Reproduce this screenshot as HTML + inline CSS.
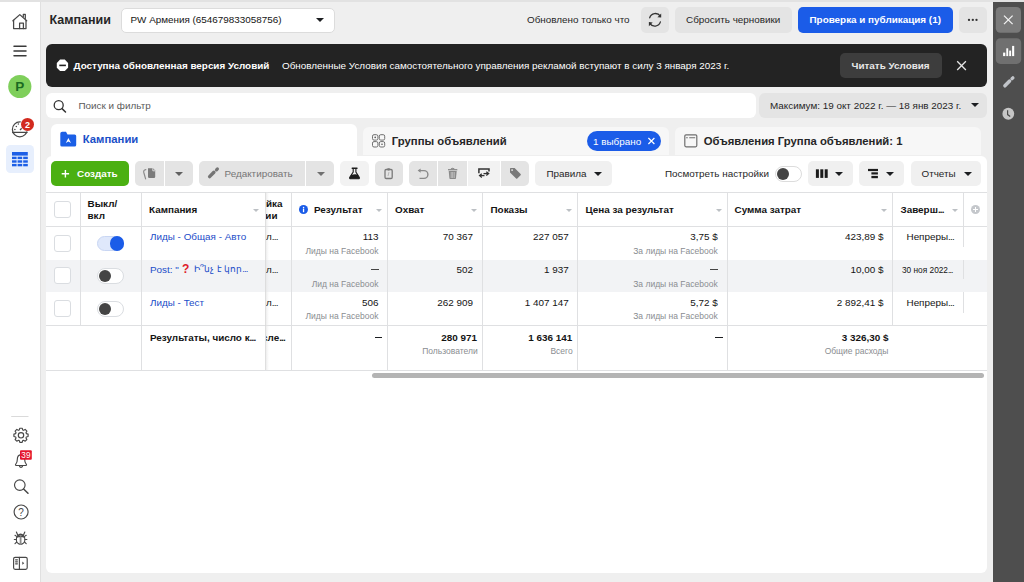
<!DOCTYPE html>
<html><head><meta charset="utf-8">
<style>
*{margin:0;padding:0;box-sizing:border-box}
html,body{width:1024px;height:582px;overflow:hidden}
body{background:#efefef;font-family:"Liberation Sans",sans-serif;color:#141414;position:relative}
.a{position:absolute}
.t{position:absolute;white-space:nowrap;line-height:1;font-size:9.9px}
.b{font-weight:bold}
.btn{position:absolute;background:#e4e4e4;border-radius:5px}
.tri{position:absolute;width:0;height:0;border-left:4px solid transparent;border-right:4px solid transparent;border-top:4.5px solid #1c1e21}
.stri{position:absolute;width:0;height:0;border-left:3px solid transparent;border-right:3px solid transparent;border-top:3px solid #bcc0c4}
.vl{position:absolute;width:1px;background:#dfe0e2}
.hl{position:absolute;height:1px;background:#dfe0e2}
.el{letter-spacing:-0.8px}
.sub{font-size:8.5px;color:#8a8d91}
svg{position:absolute;overflow:visible}
</style></head><body>

<!-- top strip -->
<div class="a" style="left:0;top:0;width:1024px;height:2px;background:#e2e2e2"></div>

<!-- left sidebar -->
<div class="a" style="left:0;top:2px;width:41px;height:580px;background:#fff;border-right:1px solid #e0e0e0"></div>

<!-- right dark panel -->
<div class="a" style="left:993px;top:2px;width:31px;height:580px;background:#4e4e4e"></div>

<!-- header -->
<div class="t b" style="left:49.5px;top:13.6px;font-size:12.5px;color:#262626">Кампании</div>
<div class="a" style="left:121px;top:7.5px;width:213.5px;height:25px;background:#fff;border:1px solid #dcdcdc;border-radius:5px"></div>
<div class="t" style="left:130.5px;top:15.4px">PW Армения (654679833058756)</div>
<div class="tri" style="left:316px;top:17.5px"></div>

<div class="t" style="left:527px;top:15.4px;color:#262626">Обновлено только что</div>
<div class="btn" style="left:641px;top:7px;width:28px;height:26px"></div>
<div class="btn" style="left:675px;top:7px;width:117px;height:26px"></div>
<div class="t" style="left:686px;top:15.4px;color:#262626">Сбросить черновики</div>
<div class="a" style="left:798px;top:7px;width:155px;height:25.5px;background:#1b5ce8;border-radius:5px"></div>
<div class="t b" style="left:809.5px;top:15.4px;color:#fff">Проверка и публикация (1)</div>
<div class="btn" style="left:958.5px;top:7px;width:28.5px;height:26px"></div>

<!-- banner -->
<div class="a" style="left:45.5px;top:44px;width:941.5px;height:43px;background:#232323;border-radius:6px"></div>
<div class="t b" style="left:73.5px;top:60.7px;color:#fff">Доступна обновленная версия Условий</div>
<div class="t" style="left:282px;top:60.7px;color:#fff">Обновленные Условия самостоятельного управления рекламой вступают в силу 3 января 2023 г.</div>
<div class="a" style="left:840px;top:53px;width:101.5px;height:25px;background:#3d3d3d;border-radius:5px"></div>
<div class="t b" style="left:851.5px;top:60.7px;color:#e8e8e8">Читать Условия</div>

<!-- search -->
<div class="a" style="left:46px;top:93px;width:709.5px;height:25px;background:#fff;border-radius:6px"></div>
<div class="t" style="left:78.5px;top:100.7px;color:#5a5a5a">Поиск и фильтр</div>
<div class="a" style="left:759px;top:92.5px;width:228px;height:25.5px;background:#e4e4e4;border-radius:6px"></div>
<div class="t" style="left:770px;top:100.7px;color:#262626">Максимум: 19 окт 2022 г. — 18 янв 2023 г.</div>
<div class="tri" style="left:970.5px;top:103px"></div>

<!-- tabs -->
<div class="a" style="left:51px;top:124px;width:306px;height:40px;background:#fff;border-radius:6px 6px 0 0"></div>
<div class="t b" style="left:82.8px;top:133.8px;font-size:11.3px;color:#1a4fc8">Кампании</div>
<div class="a" style="left:363px;top:127px;width:306px;height:28px;background:#f7f7f7;border-radius:6px 6px 0 0"></div>
<div class="t b" style="left:391.8px;top:135.6px;font-size:11.3px;color:#262626">Группы объявлений</div>
<div class="a" style="left:587px;top:131px;width:74px;height:20px;background:#1b5ce8;border-radius:10px"></div>
<div class="t" style="left:593px;top:137px;color:#fff">1 выбрано</div>
<div class="a" style="left:675px;top:127px;width:306px;height:28px;background:#f7f7f7;border-radius:6px 6px 0 0"></div>
<div class="t b" style="left:703.8px;top:135.6px;font-size:11.3px;color:#262626">Объявления Группа объявлений: 1</div>

<!-- main card -->
<div class="a" style="left:46px;top:155.5px;width:941px;height:417px;background:#fff;border-radius:6px"></div>

<!-- toolbar -->
<div class="a" style="left:51px;top:161px;width:78px;height:25px;background:#4bb012;border-radius:5px"></div>
<div class="t b" style="left:77px;top:168.7px;color:#fff">Создать</div>
<div class="btn" style="left:135px;top:161px;width:28.5px;height:25px;border-radius:5px 0 0 5px"></div>
<div class="btn" style="left:164.5px;top:161px;width:28px;height:25px;border-radius:0 5px 5px 0"></div>
<div class="tri" style="left:175px;top:171.5px;border-top-color:#606060"></div>
<div class="btn" style="left:199px;top:161px;width:106px;height:25px;border-radius:5px 0 0 5px"></div>
<div class="btn" style="left:306px;top:161px;width:28px;height:25px;border-radius:0 5px 5px 0"></div>
<div class="t" style="left:224.5px;top:168.7px;color:#767676">Редактировать</div>
<div class="tri" style="left:317px;top:171.5px;border-top-color:#707070"></div>
<div class="btn" style="left:340px;top:161px;width:28.5px;height:25px;background:#f2f2f2"></div>
<div class="btn" style="left:374.5px;top:161px;width:28.5px;height:25px"></div>
<div class="btn" style="left:408.5px;top:161px;width:28.5px;height:25px;border-radius:5px 0 0 5px"></div>
<div class="btn" style="left:438px;top:161px;width:29px;height:25px;border-radius:0"></div>
<div class="btn" style="left:468px;top:161px;width:31.5px;height:25px;border-radius:0;background:#f2f2f2"></div>
<div class="btn" style="left:501px;top:161px;width:28px;height:25px;border-radius:0 5px 5px 0"></div>
<div class="btn" style="left:535px;top:161px;width:77px;height:25px;background:#f0f0f0"></div>
<div class="t" style="left:546.5px;top:168.7px;color:#262626">Правила</div>
<div class="tri" style="left:594px;top:171.5px"></div>
<div class="t" style="left:665px;top:168.7px;color:#262626">Посмотреть настройки</div>
<div class="a" style="left:775px;top:166px;width:26.5px;height:15.5px;border:1px solid #dcdcdc;border-radius:8px;background:#fff"></div>
<div class="a" style="left:776.5px;top:167.7px;width:12px;height:12px;border-radius:50%;background:#444"></div>
<div class="btn" style="left:807.5px;top:161px;width:45px;height:25px;background:#f0f0f0"></div>
<div class="tri" style="left:835px;top:171.5px"></div>
<div class="btn" style="left:859px;top:161px;width:44.5px;height:25px;background:#f0f0f0"></div>
<div class="tri" style="left:886px;top:171.5px"></div>
<div class="btn" style="left:910.5px;top:161px;width:70.5px;height:25px;background:#f0f0f0"></div>
<div class="t" style="left:921.5px;top:168.7px;color:#262626">Отчеты</div>
<div class="tri" style="left:963.5px;top:171.5px"></div>


<!-- ICONS -->
<svg style="left:0;top:0" width="40" height="582">
 <g fill="none" stroke="#474747" stroke-width="1.25" stroke-linejoin="round" stroke-linecap="round">
  <path d="M12.9 20.8 L19.8 14.6 L26.7 20.8"/>
  <path d="M13.6 20.3 V28.5 H26 V20.3"/>
  <path d="M19.6 28.5 V23.1 H23.4 V28.5"/>
  <path d="M23.3 16.6 V14.4 H25.3 V18.4"/>
  <path d="M14 46.2 H26 M14 51 H26 M14 55.8 H26" stroke-width="1.5" stroke="#3a3a3a"/>
  <circle cx="19.8" cy="129.4" r="7.4"/>
  <path d="M12.6 132.4 H27"/>
  
 </g>
 <g fill="#474747">
  <circle cx="16.3" cy="126.4" r="0.75"/><circle cx="14.9" cy="129.6" r="0.75"/><circle cx="18.3" cy="123.9" r="0.75"/>
 </g>
 <path d="M20 130 L24 126" stroke="#474747" stroke-width="1.2"/>
 <circle cx="19.8" cy="86.5" r="11.6" fill="#7fcf5b"/>
 <text x="19.8" y="91.4" text-anchor="middle" font-family="Liberation Sans" font-weight="bold" font-size="13.5" fill="#1b6a22">P</text>
 <circle cx="27.5" cy="124.4" r="7.2" fill="#fff"/>
 <circle cx="27.5" cy="124.4" r="6.5" fill="#d22a1e"/>
 <text x="27.5" y="127.6" text-anchor="middle" font-family="Liberation Sans" font-weight="bold" font-size="9" fill="#fff">2</text>
 <rect x="6" y="145" width="28" height="28" rx="4.5" fill="#e7effd"/>
 <g fill="#1d5fe6">
  <rect x="12" y="152" width="15.8" height="3.6"/>
  <rect x="12" y="156.7" width="4.6" height="2.4"/><rect x="17.6" y="156.7" width="4.6" height="2.4"/><rect x="23.2" y="156.7" width="4.6" height="2.4"/>
  <rect x="12" y="160.3" width="4.6" height="2.4"/><rect x="17.6" y="160.3" width="4.6" height="2.4"/><rect x="23.2" y="160.3" width="4.6" height="2.4"/>
  <rect x="12" y="163.9" width="4.6" height="2.4"/><rect x="17.6" y="163.9" width="4.6" height="2.4"/><rect x="23.2" y="163.9" width="4.6" height="2.4"/>
 </g>
 <rect x="11.2" y="416" width="17.3" height="1" fill="#dadada"/>
 <g fill="none" stroke="#474747" stroke-width="1.15" stroke-linecap="round" stroke-linejoin="round">
  <path d="M26.34 433.60 L28.10 434.12 L28.10 436.48 L26.34 437.00 L25.97 437.87 L26.86 439.49 L25.19 441.16 L23.57 440.27 L22.70 440.64 L22.18 442.40 L19.82 442.40 L19.30 440.64 L18.43 440.27 L16.81 441.16 L15.14 439.49 L16.03 437.87 L15.66 437.00 L13.90 436.48 L13.90 434.12 L15.66 433.60 L16.03 432.73 L15.14 431.11 L16.81 429.44 L18.43 430.33 L19.30 429.96 L19.82 428.20 L22.18 428.20 L22.70 429.96 L23.57 430.33 L25.19 429.44 L26.86 431.11 L25.97 432.73 Z"/>
  <circle cx="21" cy="435.3" r="2.7"/>
  <path d="M16.2 465.5 C15.5 465.5 15.2 464.8 15.8 464.2 C17 463 17.3 461.5 17.3 459.5 C17.3 456.5 19 454.8 21 454.8 C23 454.8 24.7 456.5 24.7 459.5 C24.7 461.5 25 463 26.2 464.2 C26.8 464.8 26.5 465.5 25.8 465.5 Z"/>
  <path d="M19.5 466.3 A1.6 1.6 0 0 0 22.5 466.3"/>
  <circle cx="19.8" cy="485.1" r="5.3"/>
  <path d="M23.6 489 L28 493.3" stroke-width="1.5"/>
  <circle cx="21.1" cy="512" r="7"/>
  
  <ellipse cx="20.6" cy="539.6" rx="4.3" ry="4.7"/>
  <path d="M17.6 535.8 Q20.6 532.4 23.6 535.8"/>
  <path d="M16.6 537.2 Q20.6 535.6 24.6 537.2"/>
  <path d="M20.6 537.2 V544" stroke="#8a8a8a" stroke-width="1.8"/>
  <path d="M17.6 534.8 L16.4 532 M23.6 534.8 L24.8 532 M16.2 539.5 H14.3 M25 539.5 H26.9 M16.5 542.3 L15 543.6 M24.7 542.3 L26.2 543.6 M16.6 536.4 L15 535.3 M24.6 536.4 L26.2 535.3"/>
  <rect x="13.6" y="557.3" width="13.6" height="12" rx="1.5"/>
  <path d="M19.4 557.3 V569.3"/>
  <path d="M15.6 559.8 H17.4 M15.6 561.8 H17.4 M15.6 563.8 H17.4"/>
 </g>
 <path d="M22.3 561.6 L24.2 563.2 L22.3 564.8 Z" fill="#474747"/>
 <text x="21.1" y="515.6" text-anchor="middle" font-family="Liberation Sans" font-size="10" fill="#474747">?</text>
 <rect x="20" y="450.3" width="11.8" height="9.5" rx="1" fill="#e4162d"/>
 <text x="25.9" y="458.3" text-anchor="middle" font-family="Liberation Sans" font-size="8.2" fill="#fff">39</text>
</svg>
<svg style="left:0;top:0" width="1024" height="240">
 <!-- refresh -->
 <g fill="none" stroke="#333" stroke-width="1.3" stroke-linecap="round">
  <path d="M660.3 16.2 A5.9 5.9 0 0 0 649.7 17.8"/>
  <path d="M649.8 23.4 A5.9 5.9 0 0 0 660.4 21.9"/>
 </g>
 <path d="M661.2 13.4 L661.2 17.6 L657.4 17.2 Z" fill="#333"/>
 <path d="M648.9 26.3 L648.9 22.1 L652.7 22.5 Z" fill="#333"/>
 <!-- dots -->
 <g fill="#333"><circle cx="969" cy="19.9" r="1.15"/><circle cx="972.8" cy="19.9" r="1.15"/><circle cx="976.5" cy="19.9" r="1.15"/></g>
 <!-- dark panel -->
 <rect x="995.8" y="7" width="25.2" height="25.7" rx="4.5" fill="#7a7a7a"/>
 <path d="M1004 15.6 L1012.6 24.1 M1012.6 15.6 L1004 24.1" stroke="#f2f2f2" stroke-width="1.3"/>
 <rect x="995.8" y="38.3" width="25.4" height="25.6" rx="4.5" fill="#707070"/>
 <g fill="#fff"><rect x="1003.1" y="52.6" width="2.2" height="3.5"/><rect x="1006.3" y="48.3" width="1.9" height="7.8"/><rect x="1009.2" y="50.6" width="1.9" height="5.5"/><rect x="1012.1" y="45.9" width="2.1" height="10.2"/></g>
 <path d="M1004.9 85.8 L1009.6 81.1" stroke="#c1c4c9" stroke-width="3.5" stroke-linecap="round"/>
 <path d="M1012 78.7 L1012.9 77.8" stroke="#c1c4c9" stroke-width="3.3" stroke-linecap="round"/>
 <circle cx="1008.3" cy="113.75" r="5.9" fill="#c6c6c6"/>
 <path d="M1007.6 110.3 V114.6 L1010.2 116.6" fill="none" stroke="#4b4b4b" stroke-width="1.2"/>
 <!-- banner icon -->
 <path d="M60.1 59.6 H64.8 L68.1 62.9 V67.8 L64.8 71.1 H60.1 L56.8 67.8 V62.9 Z" fill="#fff"/>
 <rect x="59.3" y="64.6" width="6.6" height="1.6" fill="#232323"/>
 <path d="M957.2 61.3 L965.9 70 M965.9 61.3 L957.2 70" stroke="#e6e6e6" stroke-width="1.3"/>
 <!-- search -->
 <circle cx="58.7" cy="105.2" r="4.5" fill="none" stroke="#333" stroke-width="1.3"/>
 <path d="M62 108.6 L65.5 112" stroke="#333" stroke-width="1.5" stroke-linecap="round"/>
 <!-- tab icons -->
 <path d="M62.2 131.8 H66 L67.5 134.5 H74.6 Q76.2 134.5 76.2 136 V145 Q76.2 146.6 74.6 146.6 H61.9 Q60.3 146.6 60.3 145 V133.4 Q60.3 131.8 62.2 131.8 Z" fill="#1b5fe6"/>
 <path d="M65.8 142.9 L68.4 137.9 L71 142.9 L68.4 141.6 Z" fill="#fff"/>
 <g fill="none" stroke="#6f6f6f" stroke-width="1">
  <rect x="372.5" y="134.7" width="5.4" height="5.4" rx="1.5"/><rect x="379.3" y="134.7" width="5.4" height="5.4" rx="1.5"/>
  <rect x="372.5" y="141.6" width="5.4" height="5.4" rx="1.5"/><rect x="379.3" y="141.6" width="5.4" height="5.4" rx="1.5"/>
  <rect x="684.8" y="134.8" width="12" height="12" rx="1.2" stroke-width="1.2"/>
 </g>
 <g fill="#555"><circle cx="375.2" cy="137.4" r="0.8"/><circle cx="382" cy="144.3" r="0.8"/></g>
 <path d="M686.1 137.7 H687.8 M689.2 137.7 H695.2" stroke="#6f6f6f" stroke-width="1.1"/>
 <path d="M648.4 138 L654.4 144 M654.4 138 L648.4 144" stroke="#fff" stroke-width="1.2"/>
 <!-- plus -->
 <path d="M65.4 170 V177.4 M61.7 173.7 H69.1" stroke="#fff" stroke-width="1.4"/>
 <!-- duplicate -->
 <path d="M148 168.2 H153 L155.2 170.4 V176.7 Q155.2 177.9 154 177.9 H149.2 Q148 177.9 148 176.7 Z" fill="#7b7b7b"/>
 <path d="M152.8 168.2 V170.8 H155.2" fill="none" stroke="#e4e4e4" stroke-width="0.9"/>
 <path d="M145.8 169.6 Q143.2 170 143.8 172.5 L145.6 178.8" fill="none" stroke="#8a8a8a" stroke-width="1.2" stroke-linecap="round"/>
 <!-- pencil -->
 <path d="M209.6 176.6 L213.9 172.3" stroke="#757575" stroke-width="3.4" stroke-linecap="round"/>
 <path d="M216.5 169.8 L217.4 168.9" stroke="#757575" stroke-width="3.2" stroke-linecap="round"/>
 <!-- flask -->
 <path d="M352.2 168.2 H357" stroke="#1c1c1c" stroke-width="1.4" stroke-linecap="round"/>
 <path d="M353.2 168.8 V172 L349.8 177.3 Q349.2 178.8 350.8 178.8 H358.3 Q359.8 178.8 359.2 177.3 L355.9 172 V168.8" fill="none" stroke="#1c1c1c" stroke-width="1.1"/>
 <path d="M351.4 174.8 Q354 173.7 357.6 174.4 L359.3 177.4 Q359.8 178.8 358.3 178.8 H350.8 Q349.2 178.8 349.8 177.3 Z" fill="#1c1c1c"/>
 <!-- clipboard -->
 <rect x="385" y="169.5" width="7.2" height="9" rx="1.2" fill="none" stroke="#7a7a7a" stroke-width="1.3"/>
 <rect x="387.2" y="168.2" width="2.8" height="2.2" rx="0.8" fill="#7a7a7a"/>
 <path d="M389 172 L388 176" stroke="#b0b0b0" stroke-width="0.9"/>
 <!-- undo -->
 <path d="M419.2 170.6 H424 A3.9 3.9 0 0 1 424 178.4 H419.5" fill="none" stroke="#8a8a8a" stroke-width="1.4"/>
 <path d="M417.6 170.6 L420.6 168.4 V172.8 Z" fill="#8a8a8a"/>
 <!-- trash -->
 <path d="M448 169.7 H457.3" stroke="#8a8a8a" stroke-width="1.3"/>
 <path d="M450.9 168.9 Q452.6 167.6 454.4 168.9" fill="#8a8a8a" stroke="#8a8a8a" stroke-width="1"/>
 <path d="M448.7 171 H456.7 L456 178.3 Q455.9 178.9 455.3 178.9 H450.1 Q449.5 178.9 449.4 178.3 Z" fill="#8a8a8a"/>
 <path d="M451.2 172 V178 M452.7 172 V178 M454.2 172 V178" stroke="#e4e4e4" stroke-width="0.6"/>
 <!-- swap -->
 <path d="M478.9 173.3 V168.9 H489 V171.6" fill="none" stroke="#333" stroke-width="1.5"/>
 <path d="M483.5 173.6 H488" stroke="#333" stroke-width="1.3"/>
 <path d="M486.3 171.8 L488.6 173.6 L486.3 175.4" fill="none" stroke="#333" stroke-width="1.3"/>
 <path d="M480 175.6 H484.5" stroke="#333" stroke-width="1.3"/>
 <path d="M481.8 173.8 L479.6 175.6 L481.8 177.4" fill="none" stroke="#333" stroke-width="1.3"/>
 <!-- tag -->
 <path d="M510.7 168 H514.6 L520.6 174 Q521.2 174.6 520.6 175.2 L517.3 178.5 Q516.7 179.1 516.1 178.5 L510 172.4 V168.7 Q510 168 510.7 168 Z" fill="#7a7a7a"/>
 <rect x="511.3" y="169.3" width="1.6" height="1.6" fill="#e4e4e4"/>
 <!-- columns -->
 <g fill="#1c1c1c"><rect x="815.9" y="169.3" width="3" height="8.6"/><rect x="820.3" y="169.3" width="3" height="8.6"/><rect x="824.7" y="169.3" width="3" height="8.6"/></g>
 <!-- breakdown -->
 <g fill="#1c1c1c"><rect x="868" y="168.9" width="10" height="2.2"/><rect x="871.4" y="172.3" width="6.5" height="2.2"/><rect x="871.4" y="175.9" width="6.5" height="2.3"/></g>
</svg>

<!-- TABLE -->
<div class="hl" style="left:46px;top:191.5px;width:941px"></div>
<div class="hl" style="left:46px;top:225.5px;width:941px"></div>
<div class="a" style="left:46px;top:259.7px;width:941px;height:32.3px;background:#f2f3f5"></div>
<div class="hl" style="left:46px;top:325px;width:941px"></div>
<div class="hl" style="left:46px;top:370px;width:941px"></div>
<div class="vl" style="left:80px;top:192px;height:133px"></div>
<div class="vl" style="left:141px;top:192px;height:178px"></div>
<div class="vl" style="left:291px;top:192px;height:178px"></div>
<div class="vl" style="left:387px;top:192px;height:178px"></div>
<div class="vl" style="left:482px;top:192px;height:178px"></div>
<div class="vl" style="left:577px;top:192px;height:178px"></div>
<div class="vl" style="left:727px;top:192px;height:178px"></div>
<div class="vl" style="left:892px;top:192px;height:133px"></div>
<div class="vl" style="left:963px;top:192px;height:34px"></div>
<div class="vl" style="left:963px;top:226px;height:21px"></div>
<div class="vl" style="left:963px;top:259.7px;height:19.0px"></div>
<div class="vl" style="left:963px;top:292px;height:21px"></div>
<div class="a" style="left:265px;top:192px;width:4px;height:178px;background:linear-gradient(to right,#d6d6d6,rgba(230,230,230,0.5) 40%,rgba(255,255,255,0))"></div>
<div class="a" style="left:54px;top:201px;width:17px;height:17px;border:1px solid #dadde1;border-radius:3px;background:#fff"></div>
<div class="t b" style="left:87.5px;top:199.3px">Выкл/</div>
<div class="t b" style="left:87.5px;top:210.8px">вкл</div>
<div class="t b" style="left:149px;top:205.1px">Кампания</div>
<div class="stri" style="left:253px;top:208.5px"></div>
<div class="a" style="left:265.5px;top:192px;width:25.5px;height:34px;overflow:hidden"><div class="t b" style="right:8.5px;top:7.3px">Настройка</div><div class="t b" style="right:13.5px;top:18.8px">атрибуции</div></div>
<svg style="left:299px;top:205px" width="9" height="9" viewBox="0 0 9 9"><circle cx="4.5" cy="4.5" r="4.5" fill="#1b5ce8"/><rect x="3.9" y="3.6" width="1.3" height="3.6" fill="#fff"/><circle cx="4.55" cy="2.4" r="0.75" fill="#fff"/></svg>
<div class="t b" style="left:314px;top:205.1px">Результат</div>
<div class="stri" style="left:375.5px;top:208.5px"></div>
<div class="t b" style="left:395px;top:205.1px">Охват</div>
<div class="stri" style="left:471px;top:208.5px"></div>
<div class="t b" style="left:490.5px;top:205.1px">Показы</div>
<div class="stri" style="left:566px;top:208.5px"></div>
<div class="t b" style="left:585.5px;top:205.1px">Цена за результат</div>
<div class="stri" style="left:715.5px;top:208.5px"></div>
<div class="t b" style="left:734.5px;top:205.1px">Сумма затрат</div>
<div class="stri" style="left:881px;top:208.5px"></div>
<div class="t b" style="left:900.5px;top:205.1px">Заверш<span class="el">...</span></div>
<div class="stri" style="left:952px;top:208.5px"></div>
<svg style="left:971px;top:204.8px" width="9" height="9" viewBox="0 0 9 9"><circle cx="4.5" cy="4.5" r="4.5" fill="#c4c7cb"/><rect x="4" y="2" width="1" height="5" fill="#fff"/><rect x="2" y="4" width="5" height="1" fill="#fff"/></svg>
<div class="a" style="left:54px;top:234.8px;width:17px;height:17px;border:1px solid #dadde1;border-radius:3px;background:#fff"></div>
<div class="a" style="left:97px;top:235.5px;width:27px;height:15.5px;border-radius:8px;background:#dfe8fb;border:1px solid #c9d6f3"></div>
<div class="a" style="left:109.5px;top:236.0px;width:14.5px;height:14.5px;border-radius:50%;background:#1b5ce8"></div>
<div class="t" style="left:150px;top:232.0px;color:#1a4cc8">Лиды - Общая - Авто</div>
<div class="a" style="left:265.5px;top:230.0px;width:25.5px;height:14px;overflow:hidden"><div class="t" style="left:0.5px;top:2px">л<span class="el">...</span></div></div>
<div class="t" style="right:645.6px;top:232.0px">113</div>
<div class="t sub" style="right:645.6px;top:246.7px">Лиды на Facebook</div>
<div class="t" style="right:551px;top:232.0px">70 367</div>
<div class="t" style="right:455.3px;top:232.0px">227 057</div>
<div class="t" style="right:306.3px;top:232.0px">3,75 $</div>
<div class="t sub" style="right:306.3px;top:246.7px">За лиды на Facebook</div>
<div class="t" style="right:140.5px;top:232.0px">423,89 $</div>
<div class="t" style="left:906.5px;top:232.0px">Непреры<span class="el">...</span></div>
<div class="a" style="left:54px;top:267.4px;width:17px;height:17px;border:1px solid #dadde1;border-radius:3px;background:#fff"></div>
<div class="a" style="left:97px;top:268px;width:27px;height:15.5px;border-radius:8px;background:#fff;border:1px solid #dadde1"></div>
<div class="a" style="left:98.5px;top:269.5px;width:12.5px;height:12.5px;border-radius:50%;background:#444"></div>
<div class="t" style="left:150px;top:264.8px;color:#1a4cc8">Post: "</div><div class="t b" style="left:182px;top:263.2px;font-size:12px;color:#e0202a">?</div><div class="t" style="left:194px;top:264.8px;font-size:9.3px;color:#1a4cc8">Ի՞նչ է կոր<span class="el">...</span></div>
<div class="a" style="left:265.5px;top:262.8px;width:25.5px;height:14px;overflow:hidden"><div class="t" style="left:0.5px;top:2px">л<span class="el">...</span></div></div>
<div class="a" style="left:371px;top:268.8px;width:7.5px;height:1px;background:#444"></div>
<div class="t sub" style="right:645.6px;top:279.5px">Лид на Facebook</div>
<div class="t" style="right:551px;top:264.8px">502</div>
<div class="t" style="right:455.3px;top:264.8px">1 937</div>
<div class="a" style="left:710px;top:268.8px;width:7.5px;height:1px;background:#444"></div>
<div class="t sub" style="right:306.3px;top:279.5px">За лиды на Facebook</div>
<div class="t" style="right:140.5px;top:264.8px">10,00 $</div>
<div class="t" style="left:902px;top:265.8px;font-size:8.3px">30 ноя 2022<span class="el">...</span></div>
<div class="a" style="left:54px;top:300.3px;width:17px;height:17px;border:1px solid #dadde1;border-radius:3px;background:#fff"></div>
<div class="a" style="left:97px;top:301.2px;width:27px;height:15.5px;border-radius:8px;background:#fff;border:1px solid #dadde1"></div>
<div class="a" style="left:98.5px;top:302.7px;width:12.5px;height:12.5px;border-radius:50%;background:#444"></div>
<div class="t" style="left:150px;top:297.9px;color:#1a4cc8">Лиды - Тест</div>
<div class="a" style="left:265.5px;top:295.9px;width:25.5px;height:14px;overflow:hidden"><div class="t" style="left:0.5px;top:2px">л<span class="el">...</span></div></div>
<div class="t" style="right:645.6px;top:297.9px">506</div>
<div class="t sub" style="right:645.6px;top:312.3px">Лиды на Facebook</div>
<div class="t" style="right:551px;top:297.9px">262 909</div>
<div class="t" style="right:455.3px;top:297.9px">1 407 147</div>
<div class="t" style="right:306.3px;top:297.9px">5,72 $</div>
<div class="t sub" style="right:306.3px;top:312.3px">За лиды на Facebook</div>
<div class="t" style="right:140.5px;top:297.9px">2 892,41 $</div>
<div class="t" style="left:906.5px;top:297.9px">Непреры<span class="el">...</span></div>
<div class="t b" style="left:150px;top:333.0px">Результаты, число к<span class="el">...</span></div>
<div class="a" style="left:265.5px;top:331.0px;width:25.5px;height:14px;overflow:hidden"><div class="t b" style="left:-3.5px;top:2px">сле<span class="el">...</span></div></div>
<div class="a" style="left:374.7px;top:336.6px;width:7.5px;height:1.5px;background:#1c1e21"></div>
<div class="t b" style="right:547px;top:333.0px">280 971</div>
<div class="t sub" style="right:546.3px;top:347.4px">Пользователи</div>
<div class="t b" style="right:451.8px;top:333.0px">1 636 141</div>
<div class="t sub" style="right:451.3px;top:347.4px">Всего</div>
<div class="a" style="left:715px;top:336.6px;width:7.5px;height:1.5px;background:#1c1e21"></div>
<div class="t b" style="right:135.6px;top:333.0px">3 326,30 $</div>
<div class="t sub" style="right:135.6px;top:347.4px">Общие расходы</div>
<div class="a" style="left:371.5px;top:372.5px;width:612.5px;height:5px;border-radius:3px;background:#b4b4b4"></div>

</body></html>
